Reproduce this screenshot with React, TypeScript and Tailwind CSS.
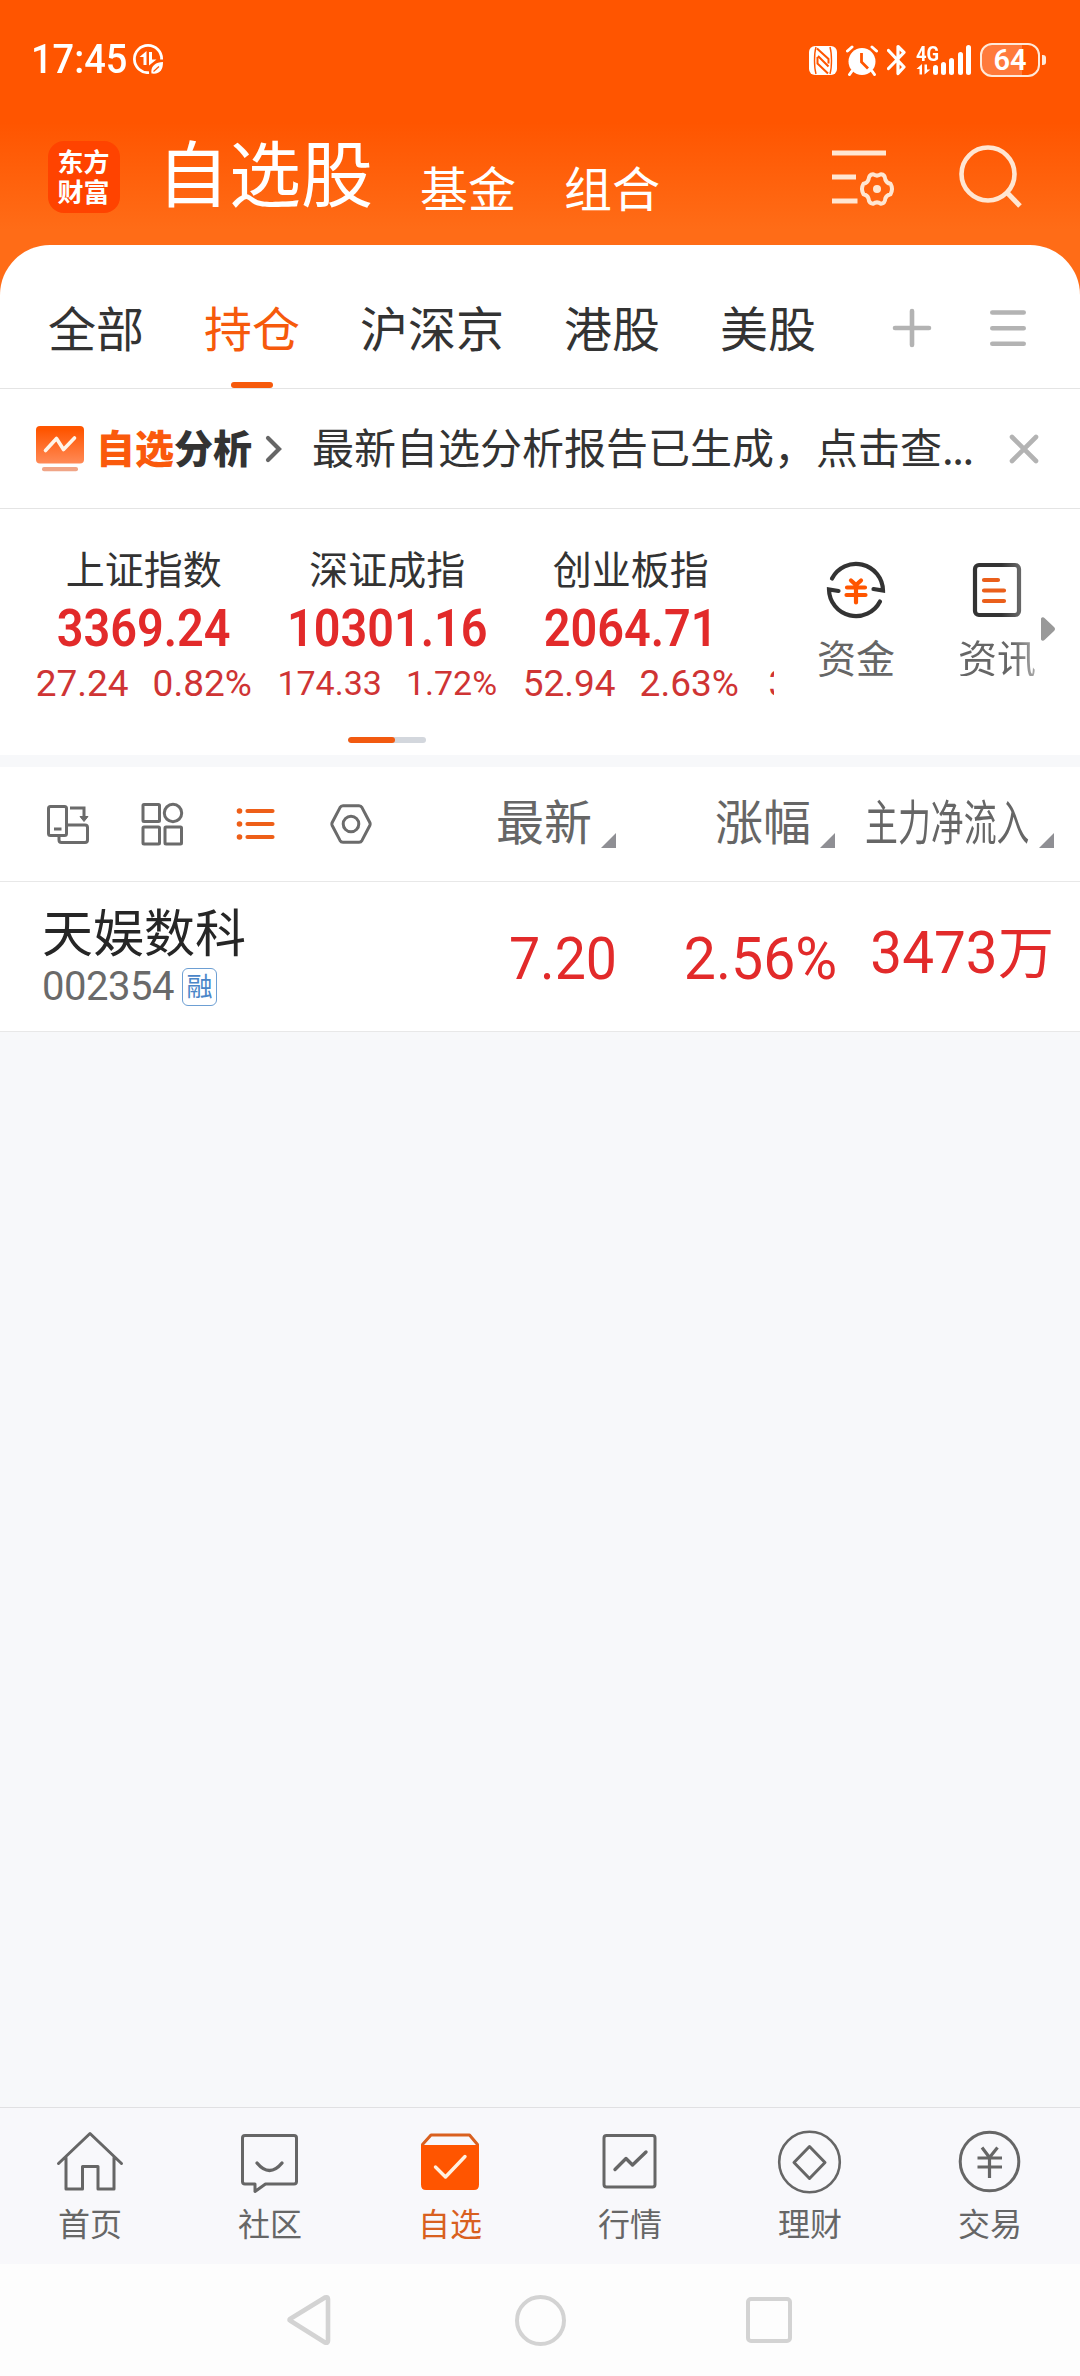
import type { ReactNode } from "react";

const tabs = ["全部", "持仓", "沪深京", "港股", "美股"];

const indexes = [
  {
    name: "上证指数",
    price: "3369.24",
    change: "27.24",
    percent: "0.82%",
    size: "text-[37px] gap-[24px]",
  },
  {
    name: "深证成指",
    price: "10301.16",
    change: "174.33",
    percent: "1.72%",
    size: "text-[34px] gap-[24px]",
  },
  {
    name: "创业板指",
    price: "2064.71",
    change: "52.94",
    percent: "2.63%",
    size: "text-[37px] gap-[24px]",
  },
];

function StatusBar() {
  return (
    <div className="flex h-[120px] items-center pl-[31px] pr-[34px] text-white">
      <span className="w-[98px] font-['Roboto'] text-[40px] font-medium leading-none whitespace-nowrap">
        <span className="inline-block origin-left scale-x-[0.95]">17:45</span>
      </span>
      <svg className="ml-[4px] -mt-[2px] h-[30px] w-[30px]" viewBox="0 0 30 30" fill="none">
        <path
          d="M16 28.600A13.600 13.600 0 1 1 28.600 15.500"
          stroke="currentColor"
          strokeWidth="2.800"
        />
        <path d="M6.500 13L13.500 7V21H10.500V13Z" fill="currentColor" />
        <path d="M16 8H19V15.500H23.500L16 21.500Z" fill="currentColor" />
        <path d="M18.500 29.500C17.500 22 22 18.500 30 18C30 26 27 30.500 18.500 29.500Z" fill="currentColor" />
        <path d="M20.500 27.500L26 22.500" stroke="#ff5500" strokeWidth="1.200" />
      </svg>

      <div className="ml-auto flex items-center">
        {/* nfc */}
        <svg className="h-[29px] w-[28px]" viewBox="0 0 28 29" fill="none">
          <rect width="28" height="29" rx="6" fill="currentColor" />
          <path
            d="M7 1C5 8 5 21 7 28M21 1C23 8 23 21 21 28"
            stroke="#ff5500"
            strokeWidth="1.400"
          />
          <path
            d="M8 2.500L19.500 13V17.500M9 10L19.500 20.500M8.500 11V17.500L19 27.500"
            stroke="#ff5500"
            strokeWidth="2"
          />
        </svg>
        {/* alarm */}
        <svg className="ml-[9px] h-[31px] w-[32px]" viewBox="0 0 32 31" fill="none">
          <circle cx="16" cy="16.500" r="13.500" fill="currentColor" />
          <path
            d="M1.500 6L6 2M30.500 6L26 2M6 26L3.500 29.500M26 26L28.500 29.500"
            stroke="currentColor"
            strokeWidth="3"
            strokeLinecap="round"
          />
          <path d="M15.500 8V17L22 23.500" stroke="#ff5500" strokeWidth="2.800" />
        </svg>
        {/* bluetooth */}
        <svg className="ml-[9px] h-[32px] w-[20px]" viewBox="0 0 20 32" fill="none">
          <path
            d="M1.500 6.500L17 23L11 29.500V2.500L17 8.500L1.500 24.500"
            stroke="currentColor"
            strokeWidth="3.200"
            strokeLinejoin="round"
            strokeLinecap="round"
          />
        </svg>
        {/* mobile signal */}
        <div className="ml-[9px] flex h-[32px] items-end">
          <div className="flex w-[24px] flex-col">
            <span className="h-[20px] w-[24px] font-['Roboto'] text-[20px] font-bold leading-[20px] whitespace-nowrap">
              <span className="inline-block origin-left scale-x-[0.92]">4G</span>
            </span>
            <svg className="h-[12px] w-[15px]" viewBox="0 0 15 12" fill="currentColor">
              <path d="M0.500 5L6 0V10.500H3.500V5Z" />
              <path d="M8.500 0.500H11V5.500H14.500L8.500 10.500Z" />
            </svg>
          </div>
          <div className="-ml-[7px] flex items-end gap-[3.3px] pb-[1px]">
            <span className="h-[10px] w-[5px] rounded-full bg-white" />
            <span className="h-[13px] w-[5px] rounded-full bg-white" />
            <span className="h-[17px] w-[5px] rounded-full bg-white" />
            <span className="h-[23px] w-[5px] rounded-full bg-white" />
            <span className="h-[30px] w-[5px] rounded-full bg-white" />
          </div>
        </div>
        {/* battery */}
        <div className="ml-[9px] flex items-center gap-[2px]">
          <div className="flex h-[34px] w-[60px] items-center justify-center rounded-[12px] border-[2.5px] border-[#ffe9d9] bg-[linear-gradient(90deg,#ff7a3b_71%,#ff5500_71%)] font-['Roboto'] text-[29px] font-semibold leading-none">
            64
          </div>
          <div className="h-[10px] w-[4px] rounded-r-[3px] bg-[#ffe9d9]" />
        </div>
      </div>
    </div>
  );
}

function Header() {
  return (
    <header className="flex h-[125px] items-start text-white">
      <div className="ml-[48px] mt-[21px] flex h-[72px] w-[72px] flex-col items-center justify-center rounded-[16px] bg-[#ff4300] pr-[1px] pb-[3px] text-[26px] font-bold leading-[30px]">
        <span>东方</span>
        <span>财富</span>
      </div>
      <h1 className="ml-[37px] mt-[14px] text-[72px] leading-[72px]">自选股</h1>
      <span className="ml-[47px] mt-[42px] text-[48px] leading-[48px]">基金</span>
      <span className="ml-[48px] mt-[42px] text-[48px] leading-[48px]">组合</span>

      <svg className="ml-auto mt-[29px] h-[60px] w-[64px]" viewBox="0 0 64 60" fill="none">
        <path d="M0 4H54M0 28H24M0 52H25.500" stroke="#ffe6d2" strokeWidth="5" />
        <path
          d="M41 25.200Q45 28 49 25.200Q53 25.500 53.300 30.500Q54.500 34 58.500 34.800Q61.500 40 58.500 45.200Q54.500 46 53.300 49.500Q53 54.300 49 54.800Q45 52 41 54.800Q37 54.300 36.500 49.500Q35.500 46 31.500 45.200Q28.500 40 31.500 34.800Q35.500 34 36.500 30.500Q37 25.500 41 25.200Z"
          stroke="#ffe6d2"
          strokeWidth="4"
          strokeLinejoin="round"
        />
        <circle cx="45" cy="40" r="4" fill="#ffe6d2" />
      </svg>
      <svg className="ml-[62px] mr-[57px] mt-[24px] h-[66px] w-[65px]" viewBox="0 0 65 66" fill="none">
        <circle cx="30" cy="30" r="26.500" stroke="#ffe6d2" strokeWidth="4.600" />
        <path d="M48 47.500L62 62" stroke="#ffe6d2" strokeWidth="5" />
      </svg>
    </header>
  );
}

function Tabs() {
  return (
    <nav className="flex h-[144px] items-start border-b border-[#e4e4e4] pl-[48px] text-[48px] leading-[48px] text-[#333]">
      <div className="flex h-[143px] gap-[60px] pt-[57px]">
        {tabs.map((tab) => (
          <div key={tab} className="flex flex-col items-center">
            <span className={tab === "持仓" ? "text-[#f65a0c]" : ""}>{tab}</span>
            {tab === "持仓" && (
              <span className="mt-auto h-[6px] w-[42px] rounded-full bg-[#f65a0c]" />
            )}
          </div>
        ))}
      </div>
      <svg className="ml-[76px] mt-[63px] h-[40px] w-[40px]" viewBox="0 0 40 40">
        <path d="M20 3V37M3 20H37" stroke="#b3b3b3" strokeWidth="4.600" strokeLinecap="round" />
      </svg>
      <svg className="ml-[58px] mt-[63px] h-[40px] w-[36px]" viewBox="0 0 36 40">
        <path
          d="M2.300 4.500H33.700M2.300 20.200H33.700M2.300 35.800H33.700"
          stroke="#b3b3b3"
          strokeWidth="4.600"
          strokeLinecap="round"
        />
      </svg>
    </nav>
  );
}

function AnalysisBanner() {
  return (
    <div className="flex h-[120px] items-center border-b border-[#e4e4e4] pl-[36px]">
      <svg className="h-[46px] w-[48px]" viewBox="0 0 48 46" fill="none">
        <defs>
          <linearGradient id="banner" x1="0" y1="0" x2="0" y2="1">
            <stop offset="0.100" stopColor="#ff5500" />
            <stop offset="1" stopColor="#ff8a57" />
          </linearGradient>
        </defs>
        <rect width="48" height="37.500" rx="4" fill="url(#banner)" />
        <path
          d="M9.500 24.500L20.500 12.500L27.500 23.500L38.500 12"
          stroke="#fff5e8"
          strokeWidth="3.600"
          strokeLinecap="round"
          strokeLinejoin="round"
        />
        <rect x="6" y="41" width="36" height="4.200" rx="2" fill="#f0a587" />
      </svg>
      <span className="ml-[12px] -mt-[5px] text-[39px] font-black leading-none text-[#333]">
        <span className="text-[#fa5a0c]">自选</span>分析
      </span>
      <svg className="ml-[13px] h-[28px] w-[18px]" viewBox="0 0 18 28" fill="none">
        <path d="M3 3L14 14L3 25" stroke="#666" strokeWidth="4.200" strokeLinecap="round" />
      </svg>
      <span className="ml-[29px] -mt-[6px] w-[660px] text-[42px] leading-none whitespace-nowrap text-[#333]">
        最新自选分析报告已生成，点击查<span className="tracking-[-1.5px]">...</span>
      </span>
      <svg className="ml-[37px] h-[30px] w-[30px]" viewBox="0 0 30 30">
        <path d="M3 3L27 27M27 3L3 27" stroke="#b3b3b3" strokeWidth="4.600" strokeLinecap="round" />
      </svg>
    </div>
  );
}

function Indexes() {
  return (
    <section className="flex h-[246px]">
      <div className="flex w-[774px] flex-col overflow-hidden">
        <div className="flex h-[228px] pl-[22px]">
          {indexes.map((item) => (
            <div
              key={item.name}
              className="flex w-[243.5px] shrink-0 flex-col items-center leading-none"
            >
              <span className="mt-[39px] text-[39px] text-[#333]">{item.name}</span>
              <span className="mt-[16px] inline-block scale-x-[0.918] font-['Roboto'] text-[51px] font-semibold text-[#e22a2a]">
                {item.price}
              </span>
              <span
                className={`mt-[9px] flex h-[40px] items-center font-['Roboto'] text-[#cf3434] ${item.size}`}
              >
                <span>{item.change}</span>
                <span>{item.percent}</span>
              </span>
            </div>
          ))}
          {/* next card peeks in from the right */}
          <div className="w-[243.5px] shrink-0 pt-[156px] pl-[16px] font-['Roboto'] text-[37px] leading-[37px] text-[#cf3434]">
            3
          </div>
        </div>
        <div className="ml-[348px] h-[6px] w-[78px] overflow-hidden rounded-full bg-[#d3d7dd]">
          <div className="h-full w-[47px] rounded-full bg-[#f25a10]" />
        </div>
      </div>

      <div className="ml-[43px] flex w-[78px] flex-col items-center text-[39px] leading-none text-[#666]">
        <svg className="mt-[51px] h-[60px] w-[60px]" viewBox="0 0 60 60" fill="none">
          <path
            d="M6 18.500A27 27 0 0 1 57 30.500L47.500 29M54 41.500A27 27 0 0 1 3 29.500L12.500 31"
            stroke="#333"
            strokeWidth="4.200"
            strokeLinecap="round"
          />
          <path
            d="M25 20.500L30 25L35 20.500M21 27.500H39M20.500 35H39.500M30 25V42.500"
            stroke="#ff5500"
            strokeWidth="4.200"
            strokeLinecap="round"
          />
        </svg>
        <span className="mt-[17px]">资金</span>
      </div>
      <div className="ml-[63px] flex w-[78px] flex-col items-center text-[39px] leading-none">
        <svg className="mt-[51px] h-[60px] w-[60px]" viewBox="0 0 60 60" fill="none">
          <defs>
            <linearGradient id="news" x1="0" y1="0" x2="1" y2="0">
              <stop offset="0.600" stopColor="#333" />
              <stop offset="1" stopColor="#666" />
            </linearGradient>
          </defs>
          <rect x="8" y="5" width="44" height="50" rx="4" stroke="url(#news)" strokeWidth="4.200" />
          <path
            d="M17 20H31M17 30.500H37M17 41H37"
            stroke="#ea5f1b"
            strokeWidth="4.200"
            strokeLinecap="round"
          />
        </svg>
        <span className="mt-[17px] bg-[linear-gradient(90deg,#666_70%,#aaa_100%)] bg-clip-text text-transparent">
          资讯
        </span>
      </div>
      <svg className="ml-[4px] mt-[107px] h-[26px] w-[16px]" viewBox="0 0 16 26">
        <path d="M1 2.500Q2.500 0 5 2.500L14 11Q16 13 14 15L5 23.500Q2.500 26 1 23.500Z" fill="#999" />
      </svg>
    </section>
  );
}

function Column({ label, className = "" }: { label: string; className?: string }) {
  return (
    <div className={`flex items-end justify-end ${className}`}>
      <span className="text-[48px] leading-[48px] whitespace-nowrap text-[#666]">{label}</span>
      <svg className="mb-[-5px] ml-[9px] h-[15px] w-[15px] shrink-0" viewBox="0 0 15 15">
        <path d="M15 0V15H0Z" fill="#8f8f94" />
      </svg>
    </div>
  );
}

function ListHeader() {
  return (
    <div className="flex h-[115px] items-start border-b border-[#e8e8e8] bg-white">
      <div className="mt-[36px] ml-[46px] flex h-[42px] items-center">
        <svg className="h-[42px] w-[44px]" viewBox="0 0 44 42" fill="none" stroke="#6b6b6b" strokeWidth="3">
          <rect x="2.500" y="3.500" width="18" height="29" rx="2" />
          <path d="M8 26H15.500M24 5H38V15" />
          <path d="M13 33V37Q13 39.500 15.500 39.500H39Q41.500 39.500 41.500 37V24.500Q41.500 22 39 22H21" />
          <path d="M34 13.500L38 18.500L42 13.500Z" fill="#6b6b6b" strokeWidth="1" />
        </svg>
        <svg className="ml-[51px] h-[44px] w-[43px]" viewBox="0 0 43 44" fill="none" stroke="#6b6b6b" strokeWidth="3">
          <rect x="2" y="2.500" width="16.500" height="17" rx="1" />
          <circle cx="32" cy="11" r="8.700" />
          <rect x="2" y="25" width="16.500" height="17" rx="1" />
          <rect x="24" y="25" width="16.500" height="17" rx="1" />
        </svg>
        <svg className="ml-[52px] h-[34px] w-[40px]" viewBox="0 0 40 34" fill="none">
          <path
            d="M11.500 4H36.500M11.500 17H36.500M11.500 30H36.500"
            stroke="#ee5f18"
            strokeWidth="4.200"
            strokeLinecap="round"
          />
          <circle cx="3.500" cy="4" r="2.800" fill="#ee5f18" />
          <circle cx="3.500" cy="17" r="2.800" fill="#ee5f18" />
          <circle cx="3.500" cy="30" r="2.800" fill="#ee5f18" />
        </svg>
        <svg className="ml-[54px] h-[42px] w-[42px]" viewBox="0 0 42 42" fill="none" stroke="#6b6b6b" strokeWidth="3">
          <path d="M13 2.800H29Q31 2.800 32 4.600L39.800 19.500Q40.500 21 39.800 22.500L32 37.400Q31 39.200 29 39.200H13Q11 39.200 10 37.400L2.200 22.500Q1.500 21 2.200 19.500L10 4.600Q11 2.800 13 2.800Z" />
          <circle cx="21" cy="21" r="7.800" />
        </svg>
      </div>
      <Column label="最新" className="mt-[28px] ml-auto w-[180px]" />
      <Column label="涨幅" className="mt-[28px] w-[219px]" />
      <div className="mt-[28px] mr-[26px] flex w-[219px] items-end">
        <span className="ml-[30px] w-[164px] text-[48px] leading-[48px] whitespace-nowrap text-[#666]">
          <span className="inline-block origin-left scale-x-[0.685]">主力净流入</span>
        </span>
        <svg className="mb-[-5px] ml-auto h-[15px] w-[15px]" viewBox="0 0 15 15">
          <path d="M15 0V15H0Z" fill="#8f8f94" />
        </svg>
      </div>
    </div>
  );
}

function StockRow() {
  return (
    <div className="flex h-[150px] items-start border-b border-[#e8e8e8] bg-white">
      <div className="ml-[42px] w-[300px]">
        <div className="mt-[22px] text-[51px] leading-[52px] text-[#262626]">天娱数科</div>
        <div className="mt-[12px] flex h-[38px] items-center">
          <span className="w-[140px] font-['Roboto'] text-[40px] leading-none tracking-[-0.5px] text-[#6a6a6a]">
            002354
          </span>
          <span className="flex h-[38px] w-[35px] items-center justify-center rounded-[6px] border-[1.5px] border-[#6d9fd3] pb-[4px] text-[26px] leading-none text-[#4a86c8]">
            融
          </span>
        </div>
      </div>
      <div className="mt-[47px] ml-auto flex font-['Roboto'] text-[59px] leading-[60px] text-[#e22a2a]">
        <span className="w-[180px] text-right">
          <span className="inline-block origin-right scale-x-[0.94]">7.20</span>
        </span>
        <span className="w-[220px] text-right">
          <span className="inline-block origin-right scale-x-[0.97]">2.56%</span>
        </span>
        <span className="-mt-[9px] mr-[26px] flex w-[217px] items-start justify-end whitespace-nowrap">
          <span className="inline-block origin-right scale-x-[0.96] leading-[66px]">3473</span>
          <span className="-mt-[4px] font-['Noto_Sans_CJK_SC'] text-[56px] leading-[66px]">万</span>
        </span>
      </div>
    </div>
  );
}

function NavItem({
  label,
  active = false,
  children,
}: {
  label: string;
  active?: boolean;
  children: ReactNode;
}) {
  return (
    <div
      className={`flex w-[180px] flex-col items-center ${active ? "text-[#d9601f]" : "text-[#666]"}`}
    >
      <svg
        className="mt-[20px] h-[68px] w-[68px]"
        viewBox="0 0 68 68"
        fill="none"
        stroke="currentColor"
        strokeWidth="3"
        strokeLinecap="round"
        strokeLinejoin="round"
      >
        {children}
      </svg>
      <span className="mt-[10px] text-[32px] leading-[32px]">{label}</span>
    </div>
  );
}

function BottomNav() {
  return (
    <nav className="mt-auto flex h-[157px] border-t border-[#e0e0e2] bg-[#f8f8fb]">
      <NavItem label="首页">
        <path d="M2.500 35.500L34 5.500L65.500 35.500M10 29.500V61H26.500V38.500H42V61H58V29.500" />
      </NavItem>
      <NavItem label="社区">
        <path d="M9 7.500H58Q60.500 7.500 60.500 10V53.500Q60.500 56 58 56H29.500L19 63.500V56H9Q6.500 56 6.500 53.500V10Q6.500 7.500 9 7.500Z" />
        <path d="M21 35Q33.500 50 46 35" strokeWidth="3.400" />
      </NavItem>
      <NavItem label="自选" active>
        <path d="M6.500 16.500L15 7H53.500L61.500 16.500" />
        <path d="M5 17H63V56.500Q63 62 58 62H10Q5 62 5 56.500Z" fill="#ff5500" stroke="none" />
        <path d="M19.500 39L29.500 49L49 28.500" stroke="#fff0e0" strokeWidth="3.400" />
      </NavItem>
      <NavItem label="行情">
        <rect x="8" y="7.500" width="51" height="51.500" rx="2.500" />
        <path d="M19 41.500L30 30.500L36.500 37L50 24" strokeWidth="3.400" />
      </NavItem>
      <NavItem label="理财">
        <circle cx="33.500" cy="34" r="30.300" strokeWidth="2.600" />
        <path d="M33.500 18.500L49 34.500L33.500 50.500L18 34.500Z" />
      </NavItem>
      <NavItem label="交易">
        <circle cx="33.500" cy="33.500" r="29.300" />
        <path
          d="M26 19.500L33.500 29.500L41.500 19.500M21.500 30H46M21.500 39H46M33.500 30V50"
          strokeWidth="3.200"
          strokeLinecap="butt"
        />
      </NavItem>
    </nav>
  );
}

function SystemNav() {
  return (
    <div className="flex h-[112px] items-center bg-[#fdfdfd]">
      <svg className="ml-[287px] h-[52px] w-[44px]" viewBox="0 0 44 52" fill="none">
        <path
          d="M3 26.500Q2 26 3 25L38 3.500Q41 2.500 41 5V47Q41 49.500 38 48.500Z"
          stroke="#d3d3d3"
          strokeWidth="4.600"
          strokeLinejoin="round"
        />
      </svg>
      <div className="ml-[184px] h-[51px] w-[51px] rounded-full border-[4.6px] border-[#d3d3d3]" />
      <div className="ml-[180px] h-[46px] w-[46px] rounded-[5px] border-[4.6px] border-[#d3d3d3]" />
    </div>
  );
}

export default function App() {
  return (
    <div className="flex h-[2376px] w-[1080px] flex-col overflow-hidden bg-[#f7f8fa] bg-[linear-gradient(180deg,#ff5500_0px,#ff5500_122px,#ff6c17_230px,#ff6c17_300px,transparent_300px)] font-['Noto_Sans_CJK_SC',sans-serif]">
      <StatusBar />
      <Header />
      <div className="rounded-t-[50px] bg-white">
        <Tabs />
        <AnalysisBanner />
        <Indexes />
      </div>
      <div className="mt-[12px]">
        <ListHeader />
        <StockRow />
      </div>
      <BottomNav />
      <SystemNav />
    </div>
  );
}
